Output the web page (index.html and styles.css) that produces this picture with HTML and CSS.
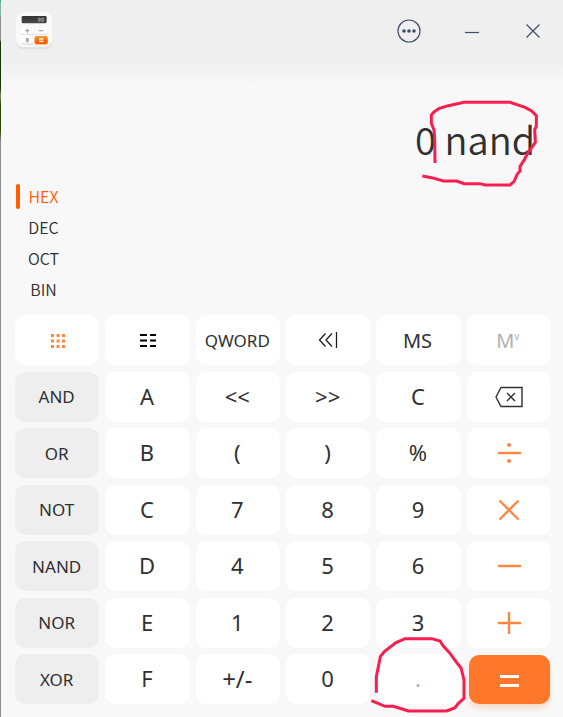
FILE: index.html
```
<!DOCTYPE html>
<html lang="en">
<head>
    <meta charset="UTF-8">
    <meta name="viewport" content="width=device-width, initial-scale=1.0">
    <title>Calculator</title>
    <link rel="stylesheet" href="styles.css">
</head>
<body>
    <div class="window">
        <!-- Title bar -->
        <header class="titlebar">
            <svg class="app-icon" viewBox="0 0 114 114" aria-hidden="true">
                <defs>
                    <linearGradient id="iconScreen" x1="0" y1="0" x2="0" y2="1">
                        <stop offset="0" stop-color="#333"/>
                        <stop offset="1" stop-color="#4a4a4a"/>
                    </linearGradient>
                    <linearGradient id="iconEqual" x1="0" y1="0" x2="0" y2="1">
                        <stop offset="0" stop-color="#ff9a3c"/>
                        <stop offset="0.5" stop-color="#ff6a00"/>
                        <stop offset="1" stop-color="#ff5a00"/>
                    </linearGradient>
                </defs>
                <rect x="2" y="6" width="110" height="106" rx="24" fill="#e3e3e3"/>
                <rect x="2" y="1" width="110" height="104" rx="24" fill="#f9f9f9"/>
                <rect x="20" y="12" width="75" height="22" rx="4" fill="url(#iconScreen)"/>
                <path d="M70 18h6v10h-6zM79 18h7v10h-7z" fill="#6f7f88" stroke="#9a8c84" stroke-width="2"/>
                <rect x="18" y="48" width="38" height="21" rx="5" fill="#e2e2e2"/>
                <rect x="18" y="45" width="38" height="20" rx="5" fill="#fff"/>
                <rect x="59" y="48" width="38" height="21" rx="5" fill="#e2e2e2"/>
                <rect x="59" y="45" width="38" height="20" rx="5" fill="#fff"/>
                <rect x="18" y="75" width="38" height="23" rx="5" fill="#dedede"/>
                <rect x="18" y="72" width="38" height="22" rx="5" fill="#fff"/>
                <rect x="59" y="75" width="39" height="25" rx="5" fill="#ffc9a8"/>
                <rect x="59" y="72" width="39" height="24" rx="5" fill="url(#iconEqual)"/>
                <path d="M31 56h12M37 50v12M72 56h13M33 80l8 8M41 80l-8 8M33 80h8M33 89h8" stroke="#a9a9a9" stroke-width="4"/>
                <path d="M72 81h13M72 88h13" stroke="#fff" stroke-width="4"/>
            </svg>
            <div class="window-buttons">
                <button class="window-button" aria-label="Menu">
                    <svg width="24" height="24" viewBox="0 0 24 24">
                        <circle cx="12" cy="12" r="11" fill="none" stroke="#414d68" stroke-width="1.2"/>
                        <circle cx="7" cy="12" r="1.8" fill="#414d68"/>
                        <circle cx="12" cy="12" r="1.8" fill="#414d68"/>
                        <circle cx="17" cy="12" r="1.8" fill="#414d68"/>
                    </svg>
                </button>
                <button class="window-button" aria-label="Minimize">
                    <svg width="24" height="24" viewBox="0 0 24 24">
                        <path d="M6 13.5h14" stroke="#414d68" stroke-width="1.2"/>
                    </svg>
                </button>
                <button class="window-button" aria-label="Close">
                    <svg width="24" height="24" viewBox="0 0 24 24">
                        <path d="M5.5 5.5l13 13M18.5 5.5l-13 13" stroke="#414d68" stroke-width="1.2"/>
                    </svg>
                </button>
            </div>
        </header>

        <main class="calculator">
            <!-- Expression -->
            <div class="display">
                <span>0 nand</span>
                <svg class="mark mark-display" viewBox="90 45 360 261" aria-hidden="true">
                    <path d="M135 234L134 160L132 135L124 115V90L132 81L148 70L175 62L222 52H360L405 67L425 78L439 92V125L434 133L436 172L410 210L403 224L390 244V258L382 267L372 290L360 300H285L270 296H222L200 288H160L125 278L97 273"/>
                </svg>
            </div>

            <!-- Number base -->
            <div class="bases">
                <button class="base active">HEX</button>
                <button class="base">DEC</button>
                <button class="base">OCT</button>
                <button class="base">BIN</button>
            </div>

            <!-- Keypad -->
            <div class="keypad">
                <button class="key icon" aria-label="Full keypad">
                    <svg width="16" height="16" viewBox="0 0 16 16" fill="#ff8841">
                        <path d="M2 2h3v3H2zM7.500 2h3v3h-3zM13 2h3v3h-3zM2 7.500h3v3H2zM7.500 7.500h3v3h-3zM13 7.500h3v3h-3zM2 13h3v3H2zM7.500 13h3v3h-3zM13 13h3v3h-3z"/>
                    </svg>
                </button>
                <button class="key icon" aria-label="Bit keypad">
                    <svg width="18" height="16" viewBox="0 0 18 16">
                        <path d="M2 3h7M12 3h6M2 8.500h7M12 8.500h6M2 14h7M12 14h6" stroke="#000" stroke-width="2"/>
                    </svg>
                </button>
                <button class="key small">QWORD</button>
                <button class="key icon" aria-label="Shift">
                    <svg width="20" height="18" viewBox="0 0 20 18" fill="none" stroke="#1c1c1c" stroke-width="1.3">
                        <path d="M7.500 2.500L1.500 9l6 6.500M14 2.500L8 9l6 6.500M18.500 1v16"/>
                    </svg>
                </button>
                <button class="key medium">MS</button>
                <button class="key medium disabled" disabled><span>M<sup>v</sup></span></button>

                <button class="key small logic">AND</button>
                <button class="key">A</button>
                <button class="key">&lt;&lt;</button>
                <button class="key">&gt;&gt;</button>
                <button class="key">C</button>
                <button class="key icon" aria-label="Backspace">
                    <svg width="28" height="22" viewBox="0 0 28 22" fill="none" stroke="#303030" stroke-width="1.4">
                        <path d="M6 1.500h21v19H6L1 11zM12 7l8 8M20 7l-8 8"/>
                    </svg>
                </button>

                <button class="key small logic">OR</button>
                <button class="key">B</button>
                <button class="key">(</button>
                <button class="key">)</button>
                <button class="key">%</button>
                <button class="key icon operator" aria-label="Divide">
                    <svg width="24" height="24" viewBox="0 0 24 24">
                        <path d="M1 12h23"/>
                        <circle cx="12" cy="4" r="2"/>
                        <circle cx="12" cy="20" r="2"/>
                    </svg>
                </button>

                <button class="key small logic">NOT</button>
                <button class="key">C</button>
                <button class="key">7</button>
                <button class="key">8</button>
                <button class="key">9</button>
                <button class="key icon operator" aria-label="Multiply">
                    <svg width="24" height="24" viewBox="0 0 24 24">
                        <path d="M2.500 2.500l19 19M21.500 2.500l-19 19"/>
                    </svg>
                </button>

                <button class="key small logic">NAND</button>
                <button class="key">D</button>
                <button class="key">4</button>
                <button class="key">5</button>
                <button class="key">6</button>
                <button class="key icon operator" aria-label="Subtract">
                    <svg width="24" height="24" viewBox="0 0 24 24">
                        <path d="M1 12h23"/>
                    </svg>
                </button>

                <button class="key small logic">NOR</button>
                <button class="key">E</button>
                <button class="key">1</button>
                <button class="key">2</button>
                <button class="key">3</button>
                <button class="key icon operator" aria-label="Add">
                    <svg width="24" height="24" viewBox="0 0 24 24">
                        <path d="M1 12h23M12 1v22"/>
                    </svg>
                </button>

                <button class="key small logic">XOR</button>
                <button class="key">F</button>
                <button class="key sign">+/-</button>
                <button class="key">0</button>
                <button class="key point disabled">.
                    <svg class="mark mark-point" viewBox="60 141 288 228" aria-hidden="true">
                        <path d="M79 308V260L91 200L103 185L138 158L165 146H245L270 153L280 168L300 190L318 215L333 234L342 270V325L325 340L315 353L290 363H175L130 349H105L64 332"/>
                    </svg>
                </button>
                <button class="key icon equals" aria-label="Equals">
                    <svg width="20" height="14" viewBox="0 0 20 14">
                        <path d="M1 3.500h19M1 12.500h19" stroke="#fff" stroke-width="3"/>
                    </svg>
                </button>
            </div>
        </main>
    </div>
</body>
</html>
```
FILE: styles.css
```
* {
    box-sizing: border-box;
}

body {
    margin: 0;
    background: linear-gradient(#00b57c 0, #7fb8a4 2px, #7fb8a4 15px, #8d8d8d 16px, #8d8d8d 40px, #173400 42px, #173400 88px, #7d8a70 96px, #2c4a00 104px, #2c4a00 130px, #8d8d8d 142px);
    color: #303030;
    font-family: "Noto Sans", "Open Sans", sans-serif;
}

button {
    border: none;
    padding: 0;
    background: none;
    color: inherit;
    font-family: inherit;
    cursor: pointer;
}

.window {
    display: flex;
    flex-direction: column;
    min-height: 100vh;
    margin-left: 1px;
    background: linear-gradient(#efefef 60px, #f8f8f8 86px);
}

/* Title bar */
.titlebar {
    display: flex;
    justify-content: space-between;
    align-items: center;
    height: 62px;
    padding: 0 10px 0 14px;
}

.app-icon {
    width: 38px;
    height: 38px;
}

.window-buttons {
    display: flex;
    gap: 22px;
}

.window-button {
    display: flex;
    align-items: center;
    justify-content: center;
    width: 40px;
    height: 40px;
}

/* Display and bases */
.calculator {
    display: flex;
    flex-direction: column;
    flex: 1;
    padding: 0 12px 13px 14px;
}

.display {
    position: relative;
    height: 118px;
    padding: 47px 16px 0 0;
    font-family: "Noto Sans CJK SC", sans-serif;
    font-size: 38px;
    font-weight: 350;
    line-height: 60px;
    text-align: right;
}

.bases {
    display: flex;
    flex-direction: column;
    align-items: flex-start;
    margin-bottom: 11px;
}

.base {
    display: flex;
    align-items: center;
    justify-content: center;
    width: 57px;
    height: 31px;
    font-family: "Noto Sans CJK SC", sans-serif;
    font-size: 16px;
    font-weight: 350;
}

.base.active {
    position: relative;
    color: #ff5d00;
}

.base.active::before {
    content: "";
    position: absolute;
    left: 1px;
    top: 4px;
    width: 4px;
    height: 25px;
    border-radius: 2px;
    background: #ff5d00;
}

/* Keypad */
.keypad {
    display: grid;
    grid-template-columns: repeat(6, 1fr);
    grid-auto-rows: 50px;
    column-gap: 6px;
    align-content: space-between;
    flex: 1;
}

.key {
    display: flex;
    align-items: center;
    justify-content: center;
    padding: 0 1px 2px 0;
    border-radius: 10px;
    background: #fff;
    font-size: 22px;
}

.key.small {
    padding-bottom: 0;
    font-size: 17px;
}

.key.medium {
    padding: 0 2px 0 0;
    font-size: 20px;
}

.key.icon {
    padding: 0;
}

.key.logic {
    background: #eee;
}

.key.sign {
    font-size: 24px;
}

.key.disabled {
    color: #b0b0b0;
}

.key sup {
    font-size: 10px;
    line-height: 0;
}

.key.operator svg {
    fill: #ff8841;
    stroke: #ff8841;
    stroke-width: 2.4;
}

.key.operator circle {
    stroke: none;
}

.key.point {
    position: relative;
}

.key.equals {
    margin: 1px 1px 0 2px;
    background: #ff772b;
    box-shadow: 0 5px 5px rgba(255, 119, 43, 0.2);
}

/* Hand-drawn circles */
.mark {
    position: absolute;
    z-index: 1;
    fill: none;
    stroke: #fa1e50;
    stroke-width: 9;
    pointer-events: none;
}

.mark-display {
    top: 38px;
    right: 11px;
    width: 120px;
    height: 87px;
}

.mark-point {
    top: -17px;
    left: -6px;
    width: 96px;
    height: 76px;
}
```
